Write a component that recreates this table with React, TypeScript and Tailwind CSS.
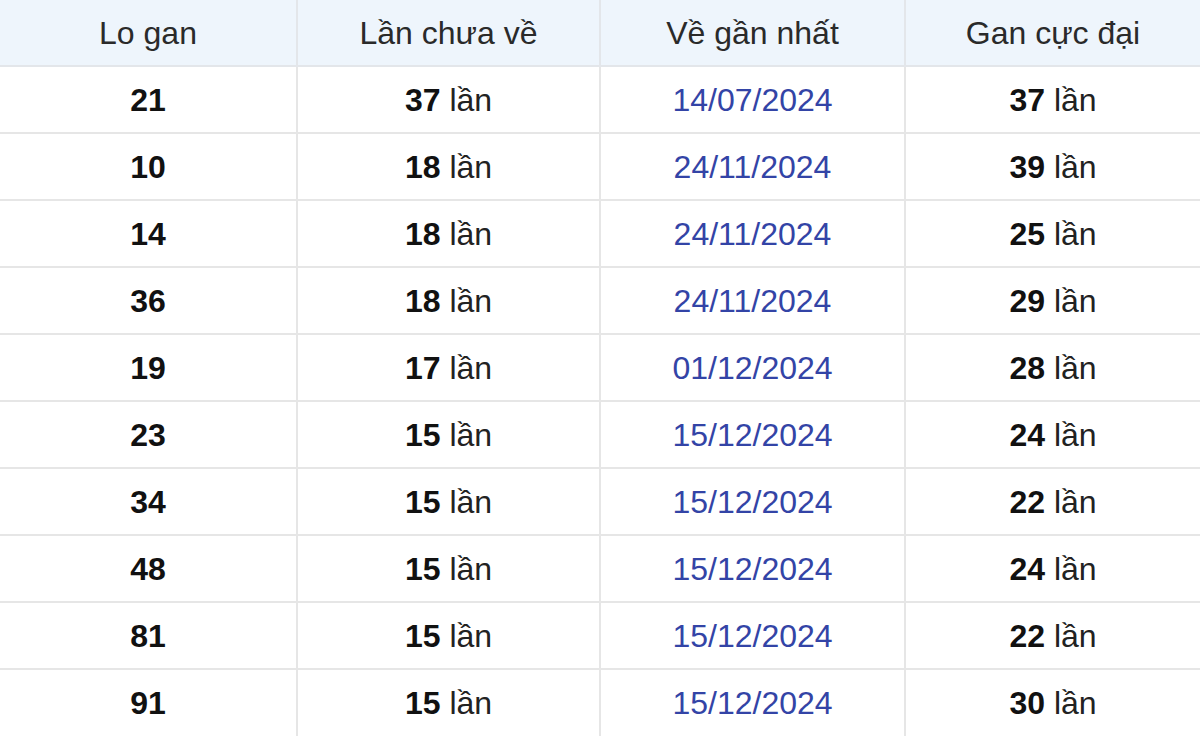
const rows: [string, string, string, string][] = [
  ['21', '37', '14/07/2024', '37'],
  ['10', '18', '24/11/2024', '39'],
  ['14', '18', '24/11/2024', '25'],
  ['36', '18', '24/11/2024', '29'],
  ['19', '17', '01/12/2024', '28'],
  ['23', '15', '15/12/2024', '24'],
  ['34', '15', '15/12/2024', '22'],
  ['48', '15', '15/12/2024', '24'],
  ['81', '15', '15/12/2024', '22'],
  ['91', '15', '15/12/2024', '30'],
];

const headers = ['Lo gan', 'Lần chưa về', 'Về gần nhất', 'Gan cực đại'];

export default function App() {
  return (
    <div className="w-[1200px] h-[744px] bg-white overflow-hidden" style={{ fontFamily: '"Liberation Sans", Arial, sans-serif' }}>
      <table className="w-full border-collapse table-fixed text-[32px]">
        <colgroup>
          <col className="w-[297px]" />
          <col className="w-[303px]" />
          <col className="w-[305px]" />
          <col />
        </colgroup>
        <thead>
          <tr className="h-[66px] bg-[#eef5fc]">
            {headers.map((h, i) => (
              <th
                key={h}
                className={`font-normal text-[#2a2a2a] text-center border-b-2 border-[#e3e6ea] ${i > 0 ? 'border-l-2' : ''}`}
              >
                {h}
              </th>
            ))}
          </tr>
        </thead>
        <tbody>
          {rows.map((r, idx) => (
            <tr key={idx} className="h-[67px]">
              <td className={`text-center font-bold text-[#111] ${idx < rows.length - 1 ? 'border-b-2 border-[#e6e6e6]' : ''}`}>{r[0]}</td>
              <td className={`text-center text-[#222] border-l-2 border-[#e6e6e6] ${idx < rows.length - 1 ? 'border-b-2' : ''}`}>
                <b className="text-[#111]">{r[1]}</b> lần
              </td>
              <td className={`text-center text-[#3344a6] border-l-2 border-[#e6e6e6] ${idx < rows.length - 1 ? 'border-b-2' : ''}`}>{r[2]}</td>
              <td className={`text-center text-[#222] border-l-2 border-[#e6e6e6] ${idx < rows.length - 1 ? 'border-b-2' : ''}`}>
                <b className="text-[#111]">{r[3]}</b> lần
              </td>
            </tr>
          ))}
        </tbody>
      </table>
    </div>
  );
}
